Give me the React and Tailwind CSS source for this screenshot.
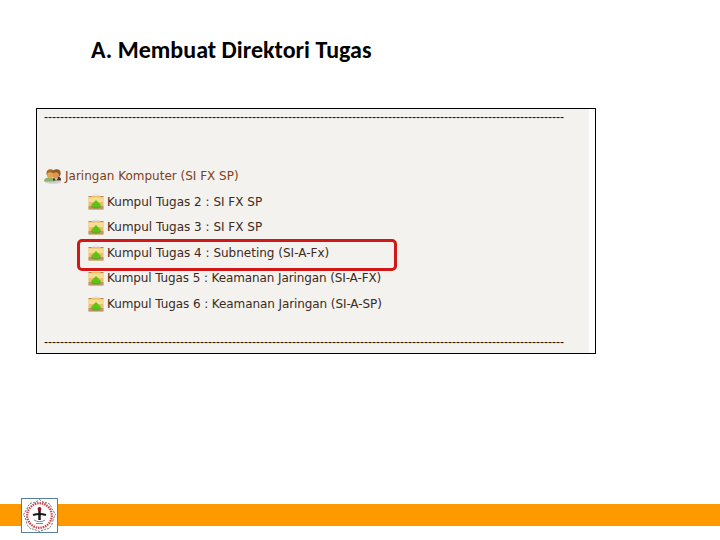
const tasks = [
  { label: "Kumpul Tugas 2 : SI FX SP", style: "" },
  { label: "Kumpul Tugas 3 : SI FX SP", style: "" },
  { label: "Kumpul Tugas 4 : Subneting (SI-A-Fx)", style: "" },
  { label: "Kumpul Tugas 5 : Keamanan Jaringan (SI-A-FX)", style: "tracking-[-0.11px]" },
  { label: "Kumpul Tugas 6 : Keamanan Jaringan (SI-A-SP)", style: "tracking-[-0.09px]" },
];

function UsersIcon() {
  return (
    <svg className="shrink-0" width="18" height="16" viewBox="0 0 18 16">
      <ellipse cx="9" cy="14" rx="8" ry="1.8" fill="#d3d1cc" />
      <path d="M0 13.5c0-3 2-4 5.5-4s5.5 1 5.5 4z" fill="#83b467" />
      <path d="M9 12.5c0-3 1-4 4-4s4 1 4 4z" fill="#4a3430" />
      <path d="M10.5 10l1.5 2.5 2-2.5z" fill="#efe7df" />
      <circle cx="6.5" cy="5.3" r="4" fill="#a66a24" />
      <circle cx="12.6" cy="5.3" r="4" fill="#8f5723" />
      <circle cx="6.2" cy="7.3" r="3.1" fill="#e5a456" />
      <circle cx="11.8" cy="7.3" r="3.1" fill="#dc9850" />
    </svg>
  );
}

function UploadIcon() {
  return (
    <svg className="shrink-0" width="16" height="16" viewBox="0 0 16 16">
      <path d="M4 1.5q4-2.5 8 0v2H4z" fill="#e4e5ec" />
      <rect x="0.5" y="2" width="15" height="13.5" rx="1" fill="#ecc069" />
      <path d="M1 3.5h14V8H1z" fill="#f8dc94" />
      <path d="M0.5 12h15v3.5H0.5z" fill="#bd9966" />
      <path d="M0.5 2.5h3M12.5 2.5h3" stroke="#b08a58" />
      <path d="M3 11.5q0 3 5 3t5-3l-5-.5z" fill="#6b9d35" />
      <path d="M8 6l5 5h-1.7v2.3H4.7V11H3z" fill="#5dc412" />
    </svg>
  );
}

function Divider() {
  return (
    <div className="h-4 whitespace-nowrap font-['Liberation_Sans',sans-serif] text-[12px] leading-4 tracking-[0.004px] text-[#111]">
      {"-".repeat(130)}
    </div>
  );
}

function Logo() {
  return (
    <svg width="37" height="36" viewBox="0 0 37 36">
      <rect x="0.5" y="1.5" width="36" height="34" fill="#fff" stroke="#56809c" />
      <path
        d="M18.5 2.5q3 3 8 3.5q3 1 4 5l4 6.5q-2 3-3 8q-1 4-4 6q-4 1-9 3q-5-2-9-3q-3-2-4-6q-1-5-3-8l4-6.5q1-4 4-5q5-.5 8-3.5z"
        fill="none"
        stroke="#555"
        strokeWidth="0.9"
        strokeDasharray="2 1.2"
      />
      <circle cx="18.5" cy="18.5" r="12.3" fill="none" stroke="#cf3d48" strokeWidth="2.2" strokeDasharray="1.5 0.9" />
      <path d="M12 18q6.5-2 13 0" fill="none" stroke="#171717" strokeWidth="2.2" />
      <path d="M18.5 13v10" stroke="#171717" strokeWidth="2.5" />
      <circle cx="18.5" cy="12" r="1.9" fill="#8b171c" />
      <path d="M13 23q3 2 5.5 1.5q3 .5 5.5-1.5M15 26.5h7" fill="none" stroke="#777" strokeWidth="0.9" />
    </svg>
  );
}

export default function App() {
  return (
    <div className="flex h-[540px] w-[720px] flex-col overflow-hidden bg-white">
      <h1 className="h-[108px] pt-[35px] pl-[91px] font-['Carlito','Lato',sans-serif] text-[24px] leading-[30px] font-bold tracking-[0.03px] whitespace-nowrap text-black">
        A. Membuat Direktori Tugas
      </h1>

      <div className="ml-9 flex h-[246px] w-[560px] border border-black">
        <div className="h-full w-[552px] bg-[#f3f2ee] pl-[7px] font-['DejaVu_Sans',sans-serif] text-[12px]">
          <Divider />
          <div className="mt-[42px] flex h-[18px] items-center gap-[3px] whitespace-nowrap text-[#7c411b]">
            <UsersIcon />
            <span>Jaringan Komputer (SI FX SP)</span>
          </div>
          <div className="relative mt-1">
            {tasks.map((task) => (
              <div key={task.label} className="flex h-[25.5px] items-center gap-[3px] pl-11 whitespace-nowrap text-[#3c2a1c]">
                <UploadIcon />
                <span className={task.style}>{task.label}</span>
              </div>
            ))}
            <div className="absolute top-[50px] left-[33px] h-8 w-[320px] rounded-[5px] border-[3px] border-[#d01818]" />
          </div>
          <div className="mt-[17px]">
            <Divider />
          </div>
        </div>
      </div>

      <div className="mt-[143px] flex h-9 items-center">
        <div className="h-[22px] w-[21px] bg-[#ff9900]" />
        <Logo />
        <div className="h-[22px] flex-1 bg-[#ff9900]" />
      </div>
    </div>
  );
}
